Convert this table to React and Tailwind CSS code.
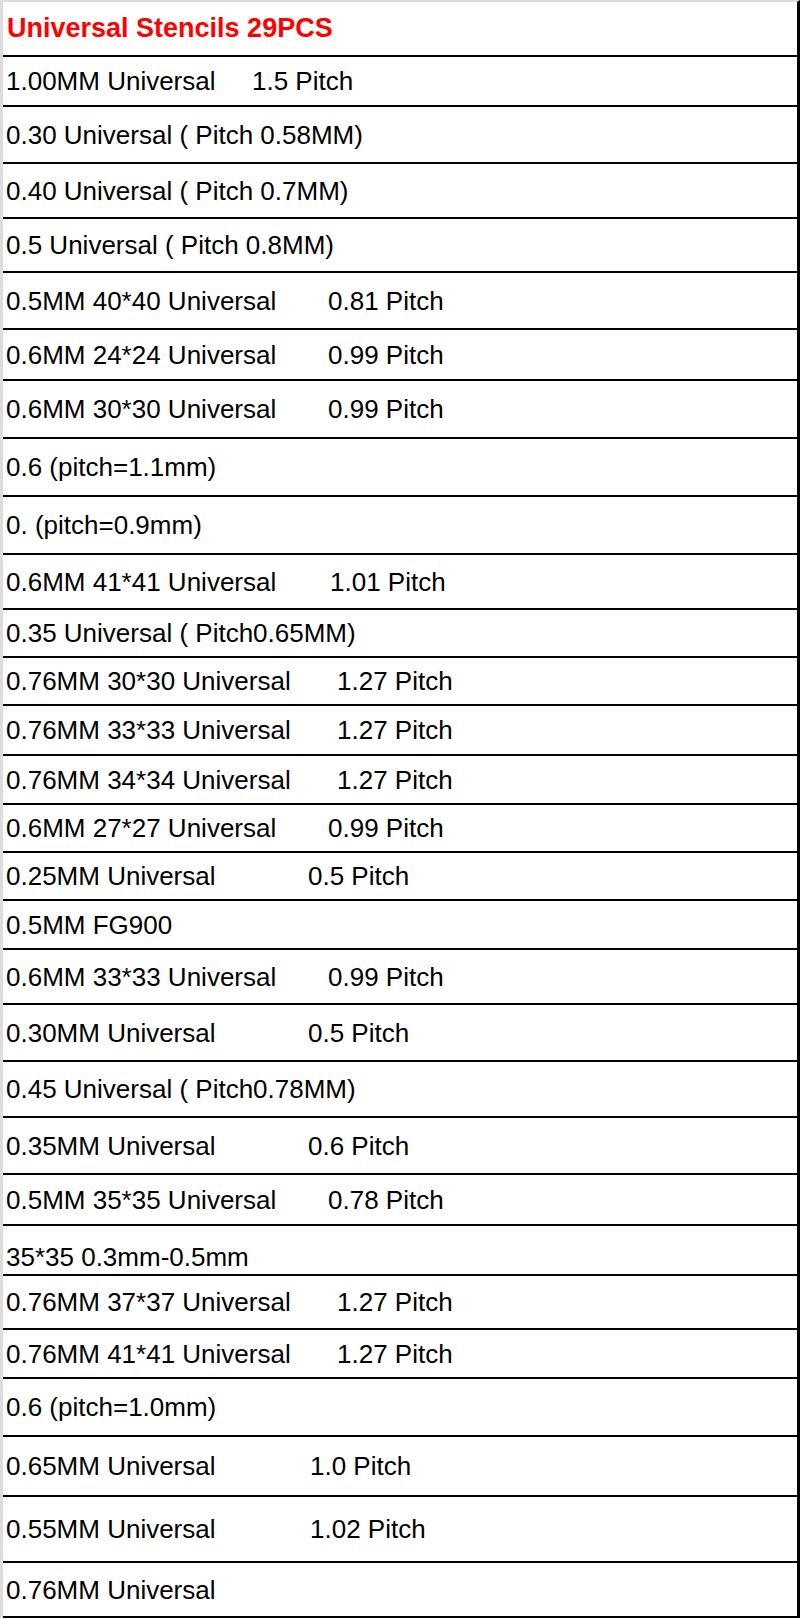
import React from "react";

const rows = [
  { h: "h-[50px]", a: "1.00MM Universal", w: "w-[246px]", b: "1.5 Pitch" },
  { h: "h-[57px]", a: "0.30 Universal ( Pitch 0.58MM)" },
  { h: "h-[55px]", a: "0.40 Universal ( Pitch 0.7MM)" },
  { h: "h-[54px]", a: "0.5 Universal ( Pitch 0.8MM)" },
  { h: "h-[57px]", a: "0.5MM 40*40 Universal", w: "w-[322px]", b: "0.81 Pitch" },
  { h: "h-[51px]", a: "0.6MM 24*24 Universal", w: "w-[322px]", b: "0.99 Pitch" },
  { h: "h-[58px]", a: "0.6MM 30*30 Universal", w: "w-[322px]", b: "0.99 Pitch" },
  { h: "h-[58px]", a: "0.6 (pitch=1.1mm)" },
  { h: "h-[58px]", a: "0. (pitch=0.9mm)" },
  { h: "h-[55px]", a: "0.6MM 41*41 Universal", w: "w-[324px]", b: "1.01 Pitch" },
  { h: "h-[48px]", a: "0.35 Universal ( Pitch0.65MM)" },
  { h: "h-[48px]", a: "0.76MM 30*30 Universal", w: "w-[331px]", b: "1.27 Pitch" },
  { h: "h-[50px]", a: "0.76MM 33*33 Universal", w: "w-[331px]", b: "1.27 Pitch" },
  { h: "h-[49px]", a: "0.76MM 34*34 Universal", w: "w-[331px]", b: "1.27 Pitch" },
  { h: "h-[48px]", a: "0.6MM 27*27 Universal", w: "w-[322px]", b: "0.99 Pitch" },
  { h: "h-[48px]", a: "0.25MM Universal", w: "w-[302px]", b: "0.5 Pitch" },
  { h: "h-[49px]", a: "0.5MM FG900" },
  { h: "h-[55px]", a: "0.6MM 33*33 Universal", w: "w-[322px]", b: "0.99 Pitch" },
  { h: "h-[57px]", a: "0.30MM Universal", w: "w-[302px]", b: "0.5 Pitch" },
  { h: "h-[56px]", a: "0.45 Universal ( Pitch0.78MM)" },
  { h: "h-[57px]", a: "0.35MM Universal", w: "w-[302px]", b: "0.6 Pitch" },
  { h: "h-[51px]", a: "0.5MM 35*35 Universal", w: "w-[322px]", b: "0.78 Pitch" },
  { h: "h-[50px]", a: "35*35 0.3mm-0.5mm", bottom: true },
  { h: "h-[54px]", a: "0.76MM 37*37 Universal", w: "w-[331px]", b: "1.27 Pitch" },
  { h: "h-[49px]", a: "0.76MM 41*41 Universal", w: "w-[331px]", b: "1.27 Pitch" },
  { h: "h-[58px]", a: "0.6 (pitch=1.0mm)" },
  { h: "h-[60px]", a: "0.65MM Universal", w: "w-[304px]", b: "1.0 Pitch" },
  { h: "h-[66px]", a: "0.55MM Universal", w: "w-[304px]", b: "1.02 Pitch" },
  { h: "h-[55px]", a: "0.76MM Universal" },
];

export default function App() {
  return (
    <div className="w-[800px] h-[1619px] bg-white">
      <div
        className="w-[800px] border-t-2 border-t-[#dcdcdc] border-l-[3px] border-l-[#dcdcdc] border-r-[3px] border-r-black"
        style={{ fontFamily: '"Liberation Sans", Arial, sans-serif' }}
      >
        <div className="h-[55px] flex items-center pl-[4px] border-b-2 border-black">
          <span className="text-[27px] font-bold text-[#f00] leading-none">
            Universal Stencils 29PCS
          </span>
        </div>
        {rows.map((r, i) => (
          <div
            key={i}
            className={`${r.h} flex ${r.bottom ? "items-end pb-[4px]" : "items-center"} pl-[3px] border-b-2 border-black text-[26px] leading-none text-black whitespace-pre`}
          >
            <span className={r.w ? `${r.w} shrink-0` : ""}>{r.a}</span>
            {r.b && <span>{r.b}</span>}
          </div>
        ))}
      </div>
    </div>
  );
}
